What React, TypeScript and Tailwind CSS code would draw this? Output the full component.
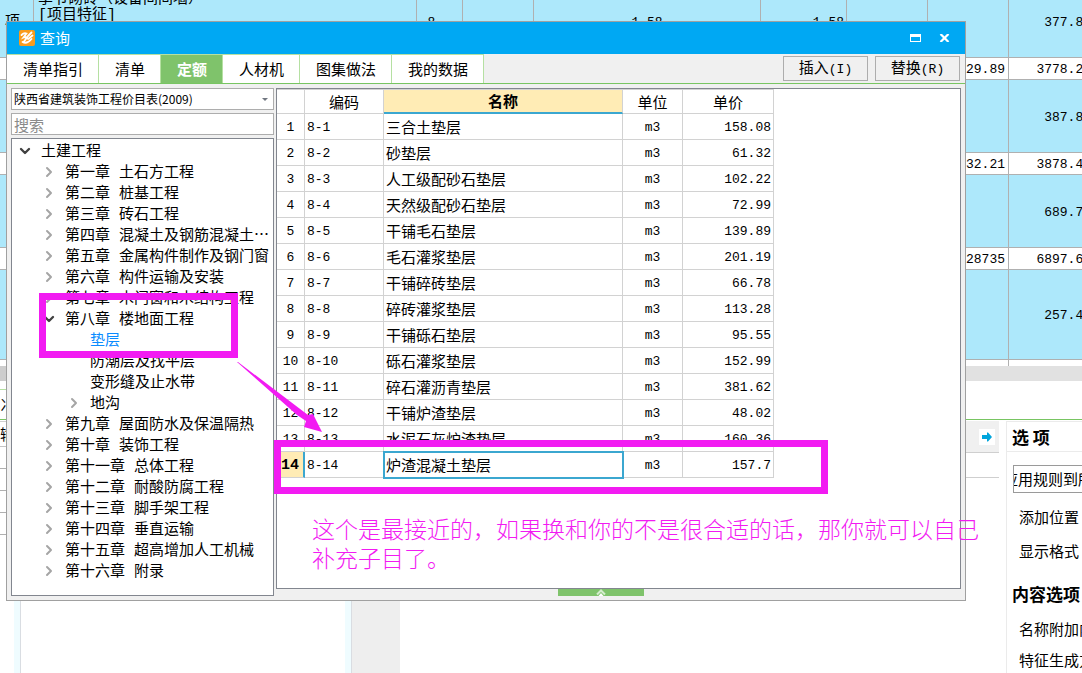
import React from 'react';
import { clsx } from 'clsx';
import { ChevronDown, ChevronRight } from 'lucide-react';

interface QuotaItem {
  code: string;
  name: string;
  price: string;
}

interface TreeNode {
  label: string;
  level: 0 | 1 | 2;
  state?: 'open' | 'closed';
  selected?: boolean;
}

interface SheetRow {
  tall?: boolean;
  height: string;
  cells: string[];
}

const tabs = ['清单指引', '清单', '定额', '人材机', '图集做法', '我的数据'];

const treeNodes: TreeNode[] = [
  { label: '土建工程', level: 0, state: 'open' },
  { label: '第一章 土石方工程', level: 1, state: 'closed' },
  { label: '第二章 桩基工程', level: 1, state: 'closed' },
  { label: '第三章 砖石工程', level: 1, state: 'closed' },
  { label: '第四章 混凝土及钢筋混凝土⋯', level: 1, state: 'closed' },
  { label: '第五章 金属构件制作及钢门窗', level: 1, state: 'closed' },
  { label: '第六章 构件运输及安装', level: 1, state: 'closed' },
  { label: '第七章 木门窗和木结构工程', level: 1, state: 'closed' },
  { label: '第八章 楼地面工程', level: 1, state: 'open' },
  { label: '垫层', level: 2, selected: true },
  { label: '防潮层及找平层', level: 2 },
  { label: '变形缝及止水带', level: 2 },
  { label: '地沟', level: 2, state: 'closed' },
  { label: '第九章 屋面防水及保温隔热', level: 1, state: 'closed' },
  { label: '第十章 装饰工程', level: 1, state: 'closed' },
  { label: '第十一章 总体工程', level: 1, state: 'closed' },
  { label: '第十二章 耐酸防腐工程', level: 1, state: 'closed' },
  { label: '第十三章 脚手架工程', level: 1, state: 'closed' },
  { label: '第十四章 垂直运输', level: 1, state: 'closed' },
  { label: '第十五章 超高增加人工机械', level: 1, state: 'closed' },
  { label: '第十六章 附录', level: 1, state: 'closed' },
];

const quotas: QuotaItem[] = [
  { code: '8-1', name: '三合土垫层', price: '158.08' },
  { code: '8-2', name: '砂垫层', price: '61.32' },
  { code: '8-3', name: '人工级配砂石垫层', price: '102.22' },
  { code: '8-4', name: '天然级配砂石垫层', price: '72.99' },
  { code: '8-5', name: '干铺毛石垫层', price: '139.89' },
  { code: '8-6', name: '毛石灌浆垫层', price: '201.19' },
  { code: '8-7', name: '干铺碎砖垫层', price: '66.78' },
  { code: '8-8', name: '碎砖灌浆垫层', price: '113.28' },
  { code: '8-9', name: '干铺砾石垫层', price: '95.55' },
  { code: '8-10', name: '砾石灌浆垫层', price: '152.99' },
  { code: '8-11', name: '碎石灌沥青垫层', price: '381.62' },
  { code: '8-12', name: '干铺炉渣垫层', price: '48.02' },
  { code: '8-13', name: '水泥石灰炉渣垫层', price: '160.36' },
  { code: '8-14', name: '炉渣混凝土垫层', price: '157.7' },
];

const sheetRows: SheetRow[] = [
  { tall: true, height: 'h-[72px]', cells: ['项', '', '8', '', '1.58', '1.58', '', '', '377.87'] },
  { height: 'h-[22px]', cells: ['', '', '', '', '', '', '', '29.89', '3778.23'] },
  { tall: true, height: 'h-[73px]', cells: ['', '', '', '', '', '', '', '', '387.84'] },
  { height: 'h-[22px]', cells: ['', '', '', '', '', '', '', '32.21', '3878.41'] },
  { tall: true, height: 'h-[73px]', cells: ['', '', '', '', '', '', '', '', '689.76'] },
  { height: 'h-[22px]', cells: ['', '', '', '', '', '', '', '28735', '6897.63'] },
  { tall: true, height: 'h-[90px]', cells: ['', '', '', '', '', '', '', '', '257.42'] },
];

const sheetAlign = [
  'text-center pr-2',
  'text-left pl-1',
  'text-center pr-4',
  '',
  'text-center',
  'text-right pr-0.5',
  '',
  'text-right pr-[3px]',
  'text-right pr-[3px]',
];

const levelPadding = { 0: 'pl-[7px]', 1: 'pl-[31px]', 2: 'pl-14' };

const Sheet: React.FC = () => (
  <div className="-mt-3.5 overflow-hidden">
    <table className="w-[1095px] table-fixed border-separate border-spacing-0 font-['Liberation_Mono','Noto_Sans_CJK_SC',monospace] text-[13px] leading-4">
      <colgroup>
        <col className="w-[34px]" />
        <col className="w-[383px]" />
        <col className="w-[46px]" />
        <col className="w-[71px]" />
        <col className="w-[227px]" />
        <col className="w-[86px]" />
        <col className="w-[81px]" />
        <col className="w-[81px]" />
        <col className="w-[86px]" />
      </colgroup>
      <tbody>
        {sheetRows.map((row, r) => (
          <tr key={r} className={clsx(row.height, row.tall ? 'bg-[#ade8fb]' : 'bg-white')}>
            {row.cells.map((cell, c) => (
              <td
                key={c}
                className={clsx('border-r border-b border-[#b0b0b0] p-0', sheetAlign[c])}
              >
                {r === 0 && c === 1 ? (
                  <div className="pb-7 text-[15px] leading-4">
                    <div>季节砌砖（设备间间墙）</div>
                    <div>[项目特征]</div>
                  </div>
                ) : (
                  <div className={clsx('pt-[3px]', c === 0 && 'text-[15px]')}>{cell}</div>
                )}
              </td>
            ))}
          </tr>
        ))}
        <tr className="h-1.5 bg-white">
          {sheetAlign.map((_, c) => (
            <td key={c} className="border-r border-[#b0b0b0] p-0" />
          ))}
        </tr>
      </tbody>
    </table>
  </div>
);

const OptionsPanel: React.FC = () => (
  <aside className="mt-px w-[76px] shrink-0 overflow-hidden border-t border-l border-[#ebebeb] text-[15px] leading-5 whitespace-nowrap">
    <h2 className="flex h-[30px] items-center border-b border-[#ebebeb] pl-[5px] text-[17px] font-bold">
      选 项
    </h2>
    <button className="mt-[13px] ml-1.5 flex h-7 w-[115px] items-center justify-center overflow-hidden border border-[#9a9a9a]">
      <span className="shrink-0">应用规则到所选清单</span>
    </button>
    <div className="mt-3.5 pl-3">添加位置</div>
    <div className="mt-3.5 pl-3">显示格式</div>
    <h2 className="mt-[23px] pl-[5px] text-[17px] font-bold">内容选项</h2>
    <div className="mt-[15px] pl-3">名称附加内容</div>
    <div className="mt-[11px] pl-3">特征生成方式</div>
  </aside>
);

const LowerPane: React.FC = () => (
  <>
    <div className="flex h-[39px] shrink-0 items-end border-b border-[#78c562]">
      <div className="flex h-[30px] w-24 items-center border-t border-[#b5e0a2] text-[15px]">
        冫
      </div>
    </div>
    <div className="flex min-h-0 flex-1">
      <div className="w-3.5 shrink-0 overflow-hidden text-[15px]">
        <div className="h-0.5 border-b border-[#d0d0d0]" />
        <div className="flex h-[25px] items-center border-b border-[#c4c4c4]">输</div>
        {[1, 2, 3, 4].map((n) => (
          <div key={n} className="h-[22px] border-b border-[#b0b0b0]" />
        ))}
      </div>
      <div className="w-[7px] shrink-0 border-r border-[#d9dde2] bg-[#effcff]" />
      <div className="w-[324px] shrink-0" />
      <div className="w-[7px] shrink-0 border-r border-[#d9dde2] bg-[#effcff]" />
      <div className="w-12 shrink-0 bg-[#eeeeee]" />
      <div className="mt-px mr-[7px] flex-1">
        <div className="flex h-8 items-center justify-end border-b border-[#cfcfcf] bg-[#f0f0f0] pr-1">
          <button className="flex size-4 items-center justify-center bg-white" aria-label="展开">
            <svg viewBox="0 0 10 10" className="size-2.5">
              <path d="M0 3h5V0.5h1L10 5 6 9.5H5V7H0z" fill="#00a5dc" />
            </svg>
          </button>
        </div>
        <div className="h-[25px] border-b border-[#cfcfcf]" />
      </div>
      <OptionsPanel />
    </div>
  </>
);

const TitleBar: React.FC = () => (
  <header className="flex h-8 items-center bg-[#00a8f3] pr-[15px] pl-3 text-white">
    <svg viewBox="0 0 16 16" className="size-4">
      <rect width="16" height="16" rx="2" fill="#f99b1c" />
      <path
        d="M2.500 5Q5 2.500 7.500 3.500L4.500 7.500Q7 6.500 8 7.500L5 11.500M9 6L12.500 2.500M9 9L13.500 5.500M3.500 12Q8 14.500 12.500 9"
        fill="none"
        stroke="#fff"
        strokeWidth="1.800"
        strokeLinecap="round"
      />
    </svg>
    <h1 className="ml-[5px] flex-1 text-[15px]">查询</h1>
    <button aria-label="最大化">
      <svg viewBox="0 0 11 8" className="h-2 w-[11px]">
        <path d="M0 0h11v8H0zM1 3v4h9V3z" fill="#fff" fillRule="evenodd" />
      </svg>
    </button>
    <button className="ml-[18px]" aria-label="关闭">
      <svg viewBox="0 0 11 8" className="h-2 w-[11px]">
        <path d="M1.500 0l8 8M9.500 0l-8 8" stroke="#fff" strokeWidth="2.200" />
      </svg>
    </button>
  </header>
);

const QuotaTree: React.FC = () => (
  <ul className="flex-1 overflow-hidden border border-[#82868f] bg-white pt-0.5 pb-[13px] font-['Liberation_Mono','Noto_Sans_CJK_SC',monospace]">
    {treeNodes.map((node) => (
      <li
        key={node.label}
        className={clsx(
          'flex h-[21px] items-center gap-[11px] text-[15px] leading-5 whitespace-nowrap',
          levelPadding[node.level],
          node.selected && 'text-[#0a8cff]',
        )}
      >
        <span className="flex w-[11px] shrink-0 justify-center pb-0.5">
          {node.state === 'open' && (
            <ChevronDown className="size-4 shrink-0 text-[#404040]" strokeWidth={3.5} />
          )}
          {node.state === 'closed' && (
            <ChevronRight className="size-4 shrink-0 text-[#a5a5a5]" strokeWidth={3} />
          )}
        </span>
        <span className="pt-0.5">{node.label}</span>
      </li>
    ))}
  </ul>
);

const QuotaTable: React.FC = () => (
  <table className="table-fixed border-separate border-spacing-0 text-[15px] leading-5">
    <colgroup>
      <col className="w-7" />
      <col className="w-[79px]" />
      <col className="w-[239px]" />
      <col className="w-[60px]" />
      <col className="w-[91px]" />
    </colgroup>
    <thead>
      <tr className="h-[25px]">
        <th className="border-t border-r border-b border-[#d2d2d2] p-0" />
        <th className="border-t border-r border-b border-[#d2d2d2] p-0 font-normal">编码</th>
        <th className="border-t border-r border-b-2 border-t-[#d2d2d2] border-r-[#d2d2d2] border-b-[#3ba7d0] bg-[#ffecb5] p-0 font-bold">
          名称
        </th>
        <th className="border-t border-r border-b border-[#d2d2d2] p-0 font-normal">单位</th>
        <th className="border-t border-r border-b border-[#d2d2d2] p-0 font-normal">单价</th>
      </tr>
    </thead>
    <tbody>
      {quotas.map((item, i) => {
        const current = i === quotas.length - 1;
        return (
          <tr
            key={item.code}
            className="h-[26px] font-['Liberation_Mono','Noto_Sans_CJK_SC',monospace] text-[13px]"
          >
            <td
              className={clsx(
                'border-b border-b-[#d2d2d2] p-0 pt-[3px] text-center',
                current
                  ? 'border-r-2 border-r-[#3ba7d0] bg-[#ffecb5] text-[15px] font-bold'
                  : 'border-r border-r-[#d2d2d2]',
              )}
            >
              {i + 1}
            </td>
            <td className="border-r border-b border-[#d2d2d2] p-0 pt-[3px] pl-0.5">{item.code}</td>
            <td
              className={clsx(
                "border-r border-b border-[#d2d2d2] p-0 pl-0.5 font-['Noto_Sans_CJK_SC',sans-serif] text-[15px]",
                current && 'outline-2 -outline-offset-1 outline-[#3ba7d0]',
              )}
            >
              {item.name}
            </td>
            <td className="border-r border-b border-[#d2d2d2] p-0 pt-[3px] text-center">m3</td>
            <td className="border-r border-b border-[#d2d2d2] p-0 pt-[3px] pr-0.5 text-right">
              {item.price}
            </td>
          </tr>
        );
      })}
    </tbody>
  </table>
);

const QueryDialog: React.FC = () => (
  <section className="absolute top-[21px] right-[116px] left-1.5 border border-[#a0a0a0] bg-[#f0f0f0]">
    <TitleBar />

    <div className="flex h-[30px] items-stretch border-b border-[#78c562]">
      {tabs.map((tab) => (
        <button
          key={tab}
          className={clsx(
            'border-t border-r border-[#b5e0a2] pr-[15px] pl-4 text-[15px]',
            tab === '定额' ? 'bg-[#7fc36b] font-bold text-white' : 'bg-white',
          )}
        >
          {tab}
        </button>
      ))}
      <div className="ml-auto flex items-center gap-[7px] pr-[5px] text-[15px] leading-5">
        <button className="h-[25px] w-[85px] border border-[#adadad]">
          插入<span className="font-['Liberation_Mono',monospace] text-[13px]">(I)</span>
        </button>
        <button className="h-[25px] w-[85px] border border-[#adadad]">
          替换<span className="font-['Liberation_Mono',monospace] text-[13px]">(R)</span>
        </button>
      </div>
    </div>

    <div className="flex gap-0.5 p-1">
      <div className="flex w-[263px] shrink-0 flex-col gap-[3px]">
        <div className="relative">
          <select
            aria-label="定额库"
            className="block h-[22px] w-full appearance-none border border-[#adadad] bg-white pl-0.5 text-xs"
          >
            <option>陕西省建筑装饰工程价目表(2009)</option>
          </select>
          <svg viewBox="0 0 6 3" className="pointer-events-none absolute top-2.5 right-1.5 h-[3px] w-1.5">
            <path d="M0 0h6L3 3z" fill="#707680" />
          </svg>
        </div>
        <input
          aria-label="搜索"
          placeholder="搜索"
          className="block h-[22px] w-full border border-[#adadad] bg-white pl-0.5 text-[15px] leading-5 placeholder:text-[#8a8a8a]"
        />
        <QuotaTree />
      </div>

      <div className="flex min-w-0 flex-1 flex-col">
        <div className="flex-1 border border-[#82868f] bg-white">
          <QuotaTable />
        </div>
        <button
          className="ml-[282px] flex h-[7px] w-[86px] items-center justify-center bg-[#7fc36b]"
          aria-label="收起"
        >
          <svg viewBox="0 0 10 7" className="h-[7px] w-2.5">
            <path d="M1 5.500L5 1.500 9 5.500" fill="none" stroke="#d5ecce" strokeWidth="2" />
            <path d="M5 4l2.500 3h-5z" fill="#fff" />
          </svg>
        </button>
      </div>
    </div>
  </section>
);

// Marker drawings and the remark lie on top of the whole window.
const Annotations: React.FC = () => (
  <div className="pointer-events-none absolute inset-0">
    <div className="absolute top-[293px] left-[39px] h-[65px] w-[199px] border-[7px] border-[#f21bf2]" />
    <div className="absolute top-[440px] left-[274px] h-[54px] w-[554px] border-[7px] border-[#f21bf2]" />
    <svg viewBox="0 0 86 71" className="absolute top-[362px] left-[237px] h-[71px] w-[86px]">
      <path d="M0 0L1 0L71 53L76 52L85 70L67 65L69 59L60 53Z" fill="#f21bf2" />
    </svg>
    <p className="absolute top-[514px] left-[312px] text-[23px] leading-[29px] font-light whitespace-nowrap text-[#f21bf2]">
      这个是最接近的，如果换和你的不是很合适的话，那你就可以自己
      <br />
      补充子目了。
    </p>
  </div>
);

const App: React.FC = () => {
  return (
    <div
      lang="zh-CN"
      className="relative flex h-screen flex-col overflow-hidden bg-white font-['Noto_Sans_CJK_SC',sans-serif] text-black"
    >
      <Sheet />
      <div className="flex h-[15px] shrink-0 bg-[#e1e1e1]">
        <div className="w-60 bg-[#cdcdcd]" />
      </div>
      <LowerPane />
      <QueryDialog />
      <Annotations />
    </div>
  );
};

export default App;
